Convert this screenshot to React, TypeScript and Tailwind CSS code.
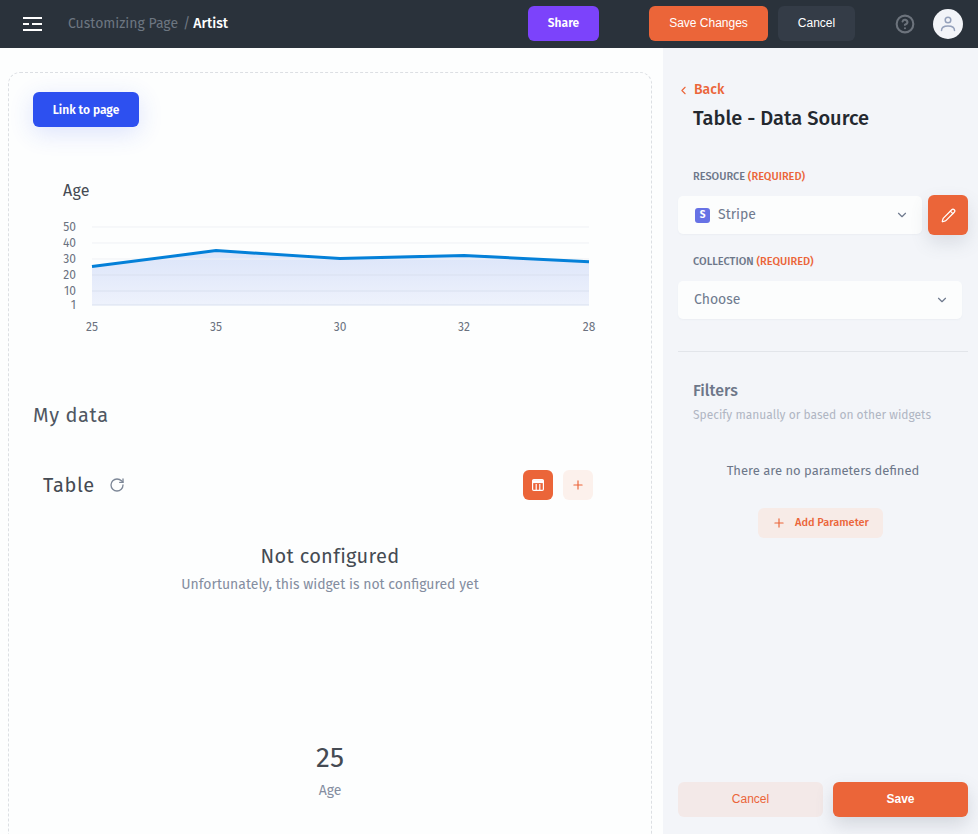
import { ChevronDown, ChevronLeft, CircleHelp, Pencil, Plus, RotateCw } from 'lucide-react';

const FONT = "font-['Fira_Sans','Noto_Sans','Open_Sans',sans-serif]";
const ARIAL = "font-['Liberation_Sans',Arial,sans-serif]";

const yTicks = [
  { label: '50', y: 227 },
  { label: '40', y: 243 },
  { label: '30', y: 259 },
  { label: '20', y: 275 },
  { label: '10', y: 291 },
  { label: '1', y: 305 },
];

const points = [
  { label: '25', x: 92, y: 266.6 },
  { label: '35', x: 216, y: 250.6 },
  { label: '30', x: 340, y: 258.6 },
  { label: '32', x: 464, y: 255.4 },
  { label: '28', x: 589, y: 261.8 },
];

const AgeChart = () => {
  // svg origin is page coords minus the chart box (33, 210)
  const line = points.map(p => `${p.x - 33},${p.y - 210}`).join(' ');
  const area = `59,95 ${line} 556,95`;

  return (
    <svg width="580" height="130" className="block">
      <defs>
        <linearGradient id="ageFill" x1="0" y1="0" x2="0" y2="1">
          <stop offset="0%" stopColor="#dbe4f9" />
          <stop offset="100%" stopColor="#eef2fc" />
        </linearGradient>
      </defs>
      <polygon points={area} fill="url(#ageFill)" />
      {yTicks.map(t => (
        <g key={t.label}>
          <line x1="59" x2="556" y1={t.y - 210} y2={t.y - 210} stroke={t.y > 262 ? '#d9e0ef' : '#eff1f5'} strokeWidth="1" />
          <text x="43" y={t.y - 210 + 4} textAnchor="end" fontSize="12" fill="#6b7280" fontFamily="Fira Sans, Noto Sans, sans-serif">{t.label}</text>
        </g>
      ))}
      <polyline points={line} fill="none" stroke="#0480d8" strokeWidth="3" />
      {points.map(p => (
        <text key={p.x} x={p.x - 33} y="121" textAnchor="middle" fontSize="12" fill="#6b7280" fontFamily="Fira Sans, Noto Sans, sans-serif">{p.label}</text>
      ))}
    </svg>
  );
};

const Select = ({ className, children }: { className: string; children: React.ReactNode }) => (
  <div className={`h-[38px] rounded-[5px] bg-[#fcfdfd] flex items-center justify-between pl-4 pr-[13px] shadow-[0_1px_2px_rgba(120,130,150,0.06)] ${className}`}>
    <div className="flex items-center text-sm text-[#6f7a8e]">{children}</div>
    <ChevronDown size={14} className="text-[#6f7a8e]" />
  </div>
);

const App = () => {
  return (
    <div className={`w-[978px] h-[834px] overflow-hidden flex flex-col bg-[#fdfefe] ${FONT}`}>
      <header className="h-12 shrink-0 bg-[#2a323b] flex items-center pl-[23px]">
        <svg width="19" height="14" viewBox="0 0 19 14" className="shrink-0">
          <path d="M0 1h19M0 7h6M9 7h10M0 13h19" stroke="#fff" strokeWidth="2" />
        </svg>
        <div className="ml-[26px] w-[460px] text-sm flex items-center">
          <span className="text-[#6d7681]">Customizing Page</span>
          <span className="text-[#6d7681] ml-[5px] mr-[3px]">/</span>
          <span className="text-white font-medium">Artist</span>
        </div>
        <button className="w-[71px] h-[35px] mb-[2px] rounded-[6px] bg-[#7c43fb] text-white text-xs font-semibold">Share</button>
        <button className={`ml-[50px] w-[119px] h-[35px] mb-[2px] rounded-[6px] bg-[#eb6539] text-white text-xs ${ARIAL}`}>Save Changes</button>
        <button className={`ml-[10px] w-[77px] h-[35px] mb-[2px] rounded-[6px] bg-[#343c47] text-white text-xs ${ARIAL}`}>Cancel</button>
        <CircleHelp size={20} strokeWidth={2.5} className="ml-[40px] text-[#6c737c]" />
        <div className="ml-[18px] w-[30px] h-[30px] rounded-full bg-[#f2f4f8] flex items-center justify-center">
          <svg width="18" height="18" viewBox="0 0 18 18" fill="none" stroke="#95a1bb" strokeWidth="1.5" strokeLinecap="round">
            <circle cx="9" cy="5" r="2.8" />
            <path d="M2.5 15.5c0-3 2.5-4.5 6.5-4.5s6.5 1.5 6.5 4.5" />
          </svg>
        </div>
      </header>

      <div className="flex flex-1 min-h-0">
        <main className="w-[663px] shrink-0 pl-2 pr-[11px] pt-6 overflow-hidden">
          <div className="h-[800px] border border-dashed border-[#dcdfe3] rounded-xl pl-6 pt-[19px]">
            <button className="w-[106px] h-[35px] rounded-[6px] bg-[#2d50f0] text-white text-xs font-semibold shadow-[0_6px_24px_rgba(45,80,240,0.16)]">Link to page</button>

            <div className="mt-[53px] ml-[30px] text-[16px] leading-[22px] tracking-[0.3px] text-[#454b53]">Age</div>
            <div className="mt-[8px]">
              <AgeChart />
            </div>

            <h2 className="mt-[61px] text-xl leading-7 tracking-[0.6px] text-[#505762]">My data</h2>

            <div className="mt-[41px] pl-[10px] pr-[58px] flex items-center justify-between">
              <div className="flex items-center">
                <span className="text-xl leading-7 tracking-[0.6px] text-[#454b53]">Table</span>
                <RotateCw size={16} className="ml-[14px] text-[#7d8797]" />
              </div>
              <div className="flex gap-[10px]">
                <div className="w-[30px] h-[30px] rounded-[6px] bg-[#eb6539] flex items-center justify-center">
                  <svg width="14" height="14" viewBox="0 0 14 14" fill="none" stroke="#fff" strokeWidth="1.2">
                    <rect x="1.6" y="1.6" width="10.8" height="10.8" rx="1.2" />
                    <path d="M1.6 3.6h10.8" strokeWidth="3" />
                    <path d="M5.2 6v6M8.8 6v6" />
                  </svg>
                </div>
                <div className="w-[30px] h-[30px] rounded-[6px] bg-[#fcf1ec] flex items-center justify-center">
                  <Plus size={14} className="text-[#eb6539]" />
                </div>
              </div>
            </div>

            <div className="mt-[42px] pr-[24px] flex flex-col items-center">
              <div className="text-xl leading-7 tracking-[0.3px] text-[#454b53]">Not configured</div>
              <div className="mt-[5px] text-sm leading-5 text-[#848da0]">Unfortunately, this widget is not configured yet</div>
            </div>

            <div className="mt-[145px] pr-[24px] flex flex-col items-center">
              <div className="text-[28px] leading-9 text-[#454b53]">25</div>
              <div className="mt-[5px] text-sm leading-5 text-[#848da0]">Age</div>
            </div>
          </div>
        </main>

        <aside className="w-[315px] shrink-0 bg-[#f3f5f9] pt-[33px] pl-[15px] pr-[10px] flex flex-col">
          <div className="flex items-center text-sm leading-[18px] text-[#eb6539] font-medium">
            <ChevronLeft size={13} className="mr-[4px] -ml-[1px]" />
            Back
          </div>
          <h1 className="mt-[5px] ml-[15px] text-xl leading-7 font-medium text-[#23282f]">Table - Data Source</h1>

          <label className="mt-[38px] ml-[15px] text-[11px] leading-[14px] font-medium text-[#6d7789]">
            RESOURCE <span className="text-[#eb6539]">(REQUIRED)</span>
          </label>
          <div className="mt-[11px] flex items-center gap-[6px]">
            <Select className="w-[244px]">
              <span className="w-[15px] h-[15px] ml-[1px] rounded-[3px] bg-[#6772e5] text-white text-[10px] font-bold flex items-center justify-center mr-2">S</span>
              Stripe
            </Select>
            <div className="w-10 h-10 rounded-[6px] bg-[#eb6539] flex items-center justify-center shadow-[0_8px_18px_rgba(90,100,120,0.16)]">
              <Pencil size={15} className="text-white" />
            </div>
          </div>

          <label className="mt-[20px] ml-[15px] text-[11px] leading-[14px] font-medium text-[#6d7789]">
            COLLECTION <span className="text-[#eb6539]">(REQUIRED)</span>
          </label>
          <Select className="mt-[12px] w-[284px]">Choose</Select>

          <div className="mt-[32px] h-px w-[290px] bg-[#e2e5ea]" />

          <div className="mt-[28px] ml-[15px] text-base leading-[22px] font-medium text-[#6d7789]">Filters</div>
          <div className="mt-[4px] ml-[15px] text-xs leading-[18px] text-[#b0b6c3]">Specify manually or based on other widgets</div>

          <div className="mt-[38px] w-[290px] text-center text-[13px] leading-[18px] text-[#6d7789]">There are no parameters defined</div>

          <button className="mt-[28px] ml-[80px] w-[125px] h-[30px] rounded-[6px] bg-[#f7ebe7] text-[#eb6539] text-[11px] font-medium flex items-center justify-center">
            <Plus size={14} className="mr-[9px]" />
            Add Parameter
          </button>

          <div className={`mt-auto mb-[17px] flex gap-[10px] text-xs ${ARIAL}`}>
            <button className="w-[145px] h-[35px] pb-[2px] rounded-[6px] bg-[#f3e9e8] text-[#eb6539]">Cancel</button>
            <button className="w-[135px] h-[35px] pb-[2px] rounded-[6px] bg-[#eb6539] text-white font-bold shadow-[0_8px_18px_rgba(90,100,120,0.2)]">Save</button>
          </div>
        </aside>
      </div>
    </div>
  );
};

export default App;
